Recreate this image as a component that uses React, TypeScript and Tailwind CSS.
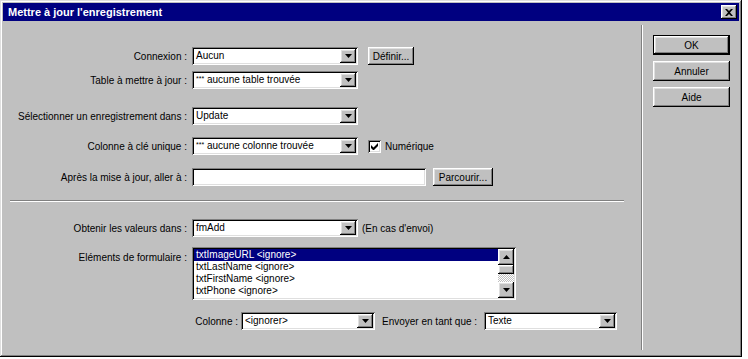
import React from "react";

const raised =
  "shadow-[inset_-1px_-1px_0_0_#000,inset_1px_1px_0_0_#fff,inset_-2px_-2px_0_0_#808080,inset_2px_2px_0_0_#dfdfdf]";
const sunken =
  "shadow-[inset_1px_1px_0_0_#808080,inset_-1px_-1px_0_0_#fff,inset_2px_2px_0_0_#000,inset_-2px_-2px_0_0_#dfdfdf]";

function Arrow({ up = false }: { up?: boolean }) {
  return (
    <svg width="7" height="4" viewBox="0 0 7 4" className={up ? "rotate-180" : ""}>
      <path d="M0 0h7L3.5 4z" fill="#000" />
    </svg>
  );
}

function ArrowBtn({ up = false, h = "h-[14px]" }: { up?: boolean; h?: string }) {
  return (
    <div className={`w-[16px] ${h} bg-[#c0c0c0] ${raised} flex items-center justify-center shrink-0`}>
      <Arrow up={up} />
    </div>
  );
}

function Combo({ value, w, small = false }: { value: string; w: string; small?: boolean }) {
  return (
    <div className={`${w} h-[18px] bg-white ${sunken} flex items-center p-[2px] shrink-0`}>
      <div className="flex-1 pl-[2px] truncate leading-none">
        {small ? (
          <>
            <span className="text-[7px] align-top">***</span> {value}
          </>
        ) : (
          value
        )}
      </div>
      <ArrowBtn />
    </div>
  );
}

function Button({ label, w, h = "h-[18px]", def = false }: { label: string; w: string; h?: string; def?: boolean }) {
  if (def) {
    return (
      <div className={`${w} ${h} border border-black bg-[#c0c0c0] flex`}>
        <div className={`flex-1 ${raised} flex items-center justify-center`}>{label}</div>
      </div>
    );
  }
  return (
    <div className={`${w} ${h} bg-[#c0c0c0] ${raised} flex items-center justify-center shrink-0`}>{label}</div>
  );
}

function Label({ children }: { children: React.ReactNode }) {
  return <div className="w-[184px] text-right shrink-0 whitespace-nowrap">{children}</div>;
}

export default function App() {
  const items = [
    "txtImageURL <ignore>",
    "txtLastName <ignore>",
    "txtFirstName <ignore>",
    "txtPhone <ignore>",
  ];
  return (
    <div className="w-[748px] h-[359px] bg-white font-['Liberation_Sans',Arial,sans-serif] text-[10px] text-black">
      <div className="w-[742px] h-[357px] bg-[#c0c0c0] p-[3px] flex flex-col shadow-[inset_-1px_-1px_0_0_#000,inset_1px_1px_0_0_#dfdfdf,inset_-2px_-2px_0_0_#808080,inset_2px_2px_0_0_#fff]">
        {/* Title bar */}
        <div className="h-[18px] bg-[#000080] flex items-center pl-[5px] pr-[2px] shrink-0">
          <div className="flex-1 text-white font-bold text-[11px] leading-none">Mettre à jour l'enregistrement</div>
          <div className={`w-[16px] h-[14px] bg-[#c0c0c0] ${raised} flex items-center justify-center`}>
            <svg width="8" height="7" viewBox="0 0 8 7">
              <path d="M0 0h2l2 2 2-2h2L5 3.5 8 7H6L4 5 2 7H0l3-3.5z" fill="#000" />
            </svg>
          </div>
        </div>
        {/* Body */}
        <div className="flex flex-1">
          {/* Left pane */}
          <div className="w-[638px] flex flex-col">
            <div className="flex items-center gap-[5px] mt-[26px]">
              <Label>Connexion :</Label>
              <Combo value="Aucun" w="w-[166px]" />
              <div className="ml-[5px]">
                <Button label="Définir..." w="w-[46px]" />
              </div>
            </div>
            <div className="flex items-center gap-[5px] mt-[6px]">
              <Label>Table à mettre à jour :</Label>
              <Combo value="aucune table trouvée" small w="w-[166px]" />
            </div>
            <div className="flex items-center gap-[5px] mt-[18px]">
              <Label>Sélectionner un enregistrement dans :</Label>
              <Combo value="Update" w="w-[166px]" />
            </div>
            <div className="flex items-center gap-[5px] mt-[12px]">
              <Label>Colonne à clé unique :</Label>
              <Combo value="aucune colonne trouvée" small w="w-[166px]" />
              <div className="ml-[5px] flex items-center gap-[4px]">
                <div className={`w-[13px] h-[13px] bg-white ${sunken} flex items-center justify-center`}>
                  <svg width="7" height="7" viewBox="0 0 7 7">
                    <path d="M0 2v3l2 2h1l4-4V0L2.5 4.5z" fill="#000" />
                  </svg>
                </div>
                <span>Numérique</span>
              </div>
            </div>
            <div className="flex items-center gap-[5px] mt-[13px]">
              <Label>Après la mise à jour, aller à :</Label>
              <div className={`w-[234px] h-[18px] bg-white ${sunken}`} />
              <div className="ml-[2px]">
                <Button label="Parcourir..." w="w-[60px]" />
              </div>
            </div>
            <div className="ml-[7px] w-[614px] mt-[14px] border-t border-[#808080] border-b border-b-white" />
            <div className="flex items-center gap-[5px] mt-[17px]">
              <Label>Obtenir les valeurs dans :</Label>
              <Combo value="fmAdd" w="w-[166px]" />
              <span className="-ml-[1px]">(En cas d'envoi)</span>
            </div>
            <div className="flex items-start gap-[5px] mt-[10px]">
              <div className="pt-[3px]">
                <Label>Eléments de formulaire :</Label>
              </div>
              <div className={`w-[324px] h-[53px] bg-white ${sunken} p-[2px] flex`}>
                <div className="flex-1 flex flex-col">
                  {items.map((t, i) => (
                    <div
                      key={t}
                      className={`h-[12px] leading-[12px] pl-[2px] whitespace-nowrap ${
                        i === 0 ? "bg-[#000080] text-white" : ""
                      }`}
                    >
                      {t}
                    </div>
                  ))}
                </div>
                <div className="w-[16px] flex flex-col">
                  <ArrowBtn up h="h-[16px]" />
                  <div className={`h-[9px] bg-[#c0c0c0] ${raised}`} />
                  <div className="flex-1 bg-[repeating-conic-gradient(#c0c0c0_0_25%,#fff_0_50%)] bg-[length:2px_2px]" />
                  <ArrowBtn h="h-[16px]" />
                </div>
              </div>
            </div>
            <div className="flex items-center mt-[12px] ml-[187px]">
              <span className="w-[48px] text-right">Colonne :</span>
              <div className="ml-[3px]">
                <Combo value="<ignorer>" w="w-[134px]" />
              </div>
              <span className="ml-[7px] w-[102px]">Envoyer en tant que :</span>
              <div>
                <Combo value="Texte" w="w-[133px]" />
              </div>
            </div>
          </div>
          {/* Vertical separator */}
          <div className="mt-[4px] mb-[4px] w-[2px] border-l border-[#808080] border-r border-r-white" />
          {/* Right buttons */}
          <div className="flex flex-col gap-[6px] ml-[10px] mt-[14px]">
            <Button label="OK" w="w-[77px]" h="h-[20px]" def />
            <Button label="Annuler" w="w-[77px]" h="h-[20px]" />
            <Button label="Aide" w="w-[77px]" h="h-[20px]" />
          </div>
        </div>
      </div>
    </div>
  );
}
